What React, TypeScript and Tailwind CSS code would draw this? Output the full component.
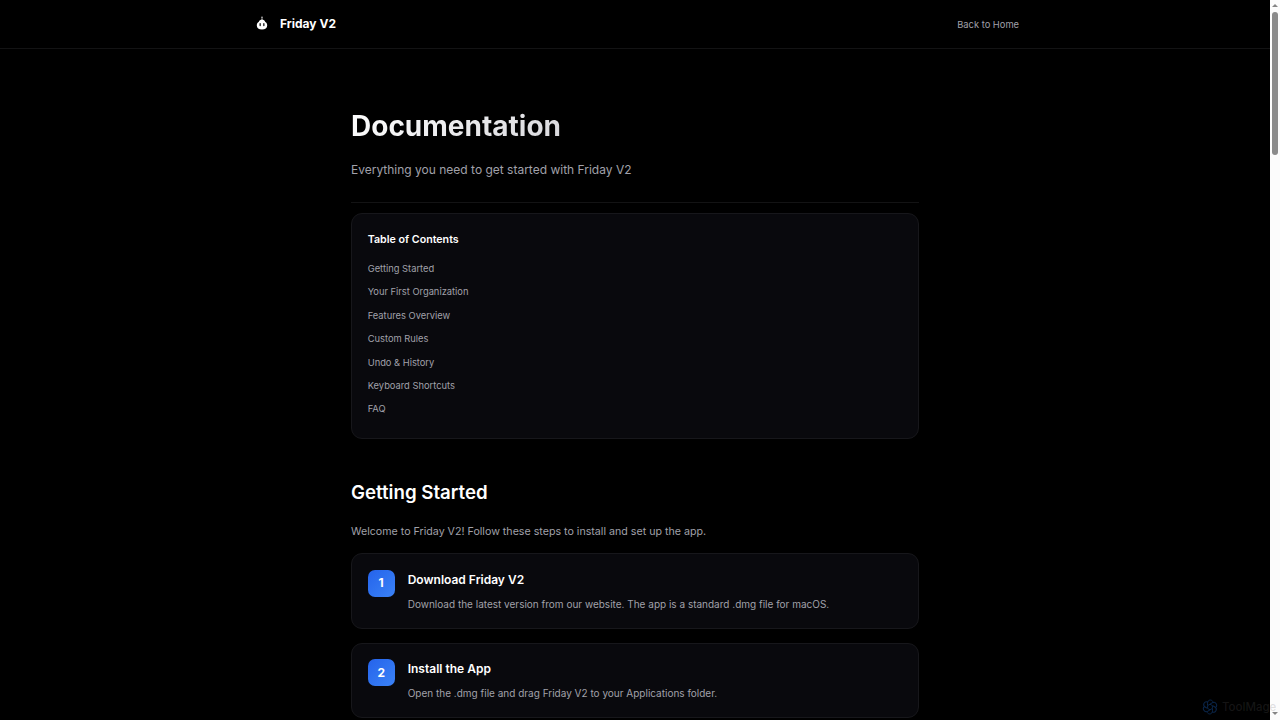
const tocItems = [
  "Getting Started",
  "Your First Organization",
  "Features Overview",
  "Custom Rules",
  "Undo & History",
  "Keyboard Shortcuts",
  "FAQ",
];

const steps = [
  {
    title: "Download Friday V2",
    text: "Download the latest version from our website. The app is a standard .dmg file for macOS.",
  },
  {
    title: "Install the App",
    text: "Open the .dmg file and drag Friday V2 to your Applications folder.",
  },
];

function RobotLogo() {
  return (
    <svg viewBox="0 0 12 14" className="mb-0.5 h-[14px] w-3" fill="none">
      <circle cx="6" cy="1.3" r="0.8" fill="#d0d0d0" />
      <path d="M6 1.5v3" stroke="#b0b0b0" strokeWidth="0.9" />
      <path
        d="M6 3.6c1.700 0 2.800.9 3.300 2.500 1.200.6 1.900 1.800 1.900 3.300 0 2.800-2 4.100-5.200 4.100S.8 12.200.8 9.400c0-1.500.7-2.700 1.900-3.300C3.200 4.500 4.300 3.600 6 3.600z"
        fill="#fff"
      />
      <rect x="3.500" y="7" width="1.300" height="3.200" rx="0.65" fill="#111" />
      <rect x="7.200" y="7" width="1.300" height="3.200" rx="0.65" fill="#111" />
    </svg>
  );
}

function Header() {
  return (
    <header className="h-[49px] border-b border-[#131314]">
      <div className="mx-auto flex h-12 w-[768px] items-center justify-between">
        <div className="flex items-center gap-3 pl-[5px]">
          <RobotLogo />
          <span className="text-[12px] font-bold leading-5 text-white">Friday V2</span>
        </div>
        <a href="#" className="pt-px text-[9.33px] leading-4 text-[#a1a1aa]">
          Back to Home
        </a>
      </div>
    </header>
  );
}

function TableOfContents() {
  return (
    <nav className="mt-[10px] h-[226px] rounded-[11px] border border-[#17171b] bg-[#09090d] px-[15.7px] pt-[17px]">
      <h3 className="text-[10.67px] font-semibold leading-[18px] text-white">Table of Contents</h3>
      <ul className="mt-[8.3px]">
        {tocItems.map((item) => (
          <li key={item} className="flex h-[23.4px] items-center text-[9.33px] leading-4 text-[#a1a1aa]">
            <a href="#">{item}</a>
          </li>
        ))}
      </ul>
    </nav>
  );
}

function Step({ number, title, text }: { number: number; title: string; text: string }) {
  return (
    <div className="flex h-[75.7px] gap-[13px] rounded-[11px] border border-[#17171b] bg-[#09090d] px-[15.7px] pt-[15.7px]">
      <div className="flex size-[27px] shrink-0 items-center justify-center rounded-[7px] bg-linear-to-br from-[#2563eb] to-[#3b82f6] text-[12px] font-bold text-white">
        {number}
      </div>
      <div>
        <h3 className="text-[12px] font-semibold leading-5 text-white">{title}</h3>
        <p className="mt-[5px] text-[10px] leading-[18px] text-[#a1a1aa]">{text}</p>
      </div>
    </div>
  );
}

function Scrollbar() {
  return (
    <div className="flex h-full w-[10px] shrink-0 flex-col items-center justify-between bg-[#fcfcfc] pt-1 pb-[5px]">
      <div className="flex flex-col items-center gap-[5px]">
        <svg viewBox="0 0 6 3" className="h-[3px] w-[6px]">
          <path d="M3 0l3 3H0z" fill="#858585" />
        </svg>
        <div className="h-[143px] w-[6px] rounded-full bg-[#8b8b8b]" />
      </div>
      <svg viewBox="0 0 6 3" className="h-[3px] w-[6px]">
        <path d="M0 0h6L3 3z" fill="#858585" />
      </svg>
    </div>
  );
}

function Watermark() {
  return (
    <div className="absolute top-[699px] left-[1202px] flex items-center gap-1">
      <svg viewBox="0 0 16 16" className="size-4" fill="none" stroke="#0a2549" strokeWidth="1">
        {/* six overlapping petals around the centre */}
        {[0, 60, 120, 180, 240, 300].map((angle) => (
          <path
            key={angle}
            d="M5.500 6.500V4.200C5.500 2.500 6.600 1 8.200 1s2.900 1.200 2.900 2.700"
            transform={`rotate(${angle} 8 8)`}
          />
        ))}
        <path d="M8 5.200l2.400 1.400v2.800L8 10.800 5.600 9.400V6.600z" />
      </svg>
      <span className="text-[11.5px] font-medium leading-4 text-[#6b6b6b]/20">ToolMage</span>
    </div>
  );
}

export default function App() {
  return (
    <div className="relative flex h-[720px] w-[1280px] overflow-hidden bg-black font-['Inter',sans-serif]">
      <div className="min-w-0 flex-1">
        <Header />
        <main className="mx-auto w-[568px] pt-[57px]">
          <div className="h-[97px] border-b border-[#131314]">
            <h1 className="w-full bg-linear-135 from-white to-[#a1a1aa] bg-clip-text text-[28px] font-bold leading-10 text-transparent">
              Documentation
            </h1>
            <p className="mt-[14px] text-[12px] leading-5 text-[#a1a1aa]">
              Everything you need to get started with Friday V2
            </p>
          </div>
          <TableOfContents />
          <section className="mt-[38px]">
            <h2 className="text-[18.67px] font-semibold leading-8 text-white">Getting Started</h2>
            <p className="mt-[13px] text-[10.67px] leading-5 text-[#a1a1aa]">
              Welcome to Friday V2! Follow these steps to install and set up the app.
            </p>
            <div className="mt-[11px] flex flex-col gap-[14px]">
              {steps.map((step, i) => (
                <Step key={step.title} number={i + 1} title={step.title} text={step.text} />
              ))}
            </div>
          </section>
        </main>
      </div>
      <Scrollbar />
      <Watermark />
    </div>
  );
}
